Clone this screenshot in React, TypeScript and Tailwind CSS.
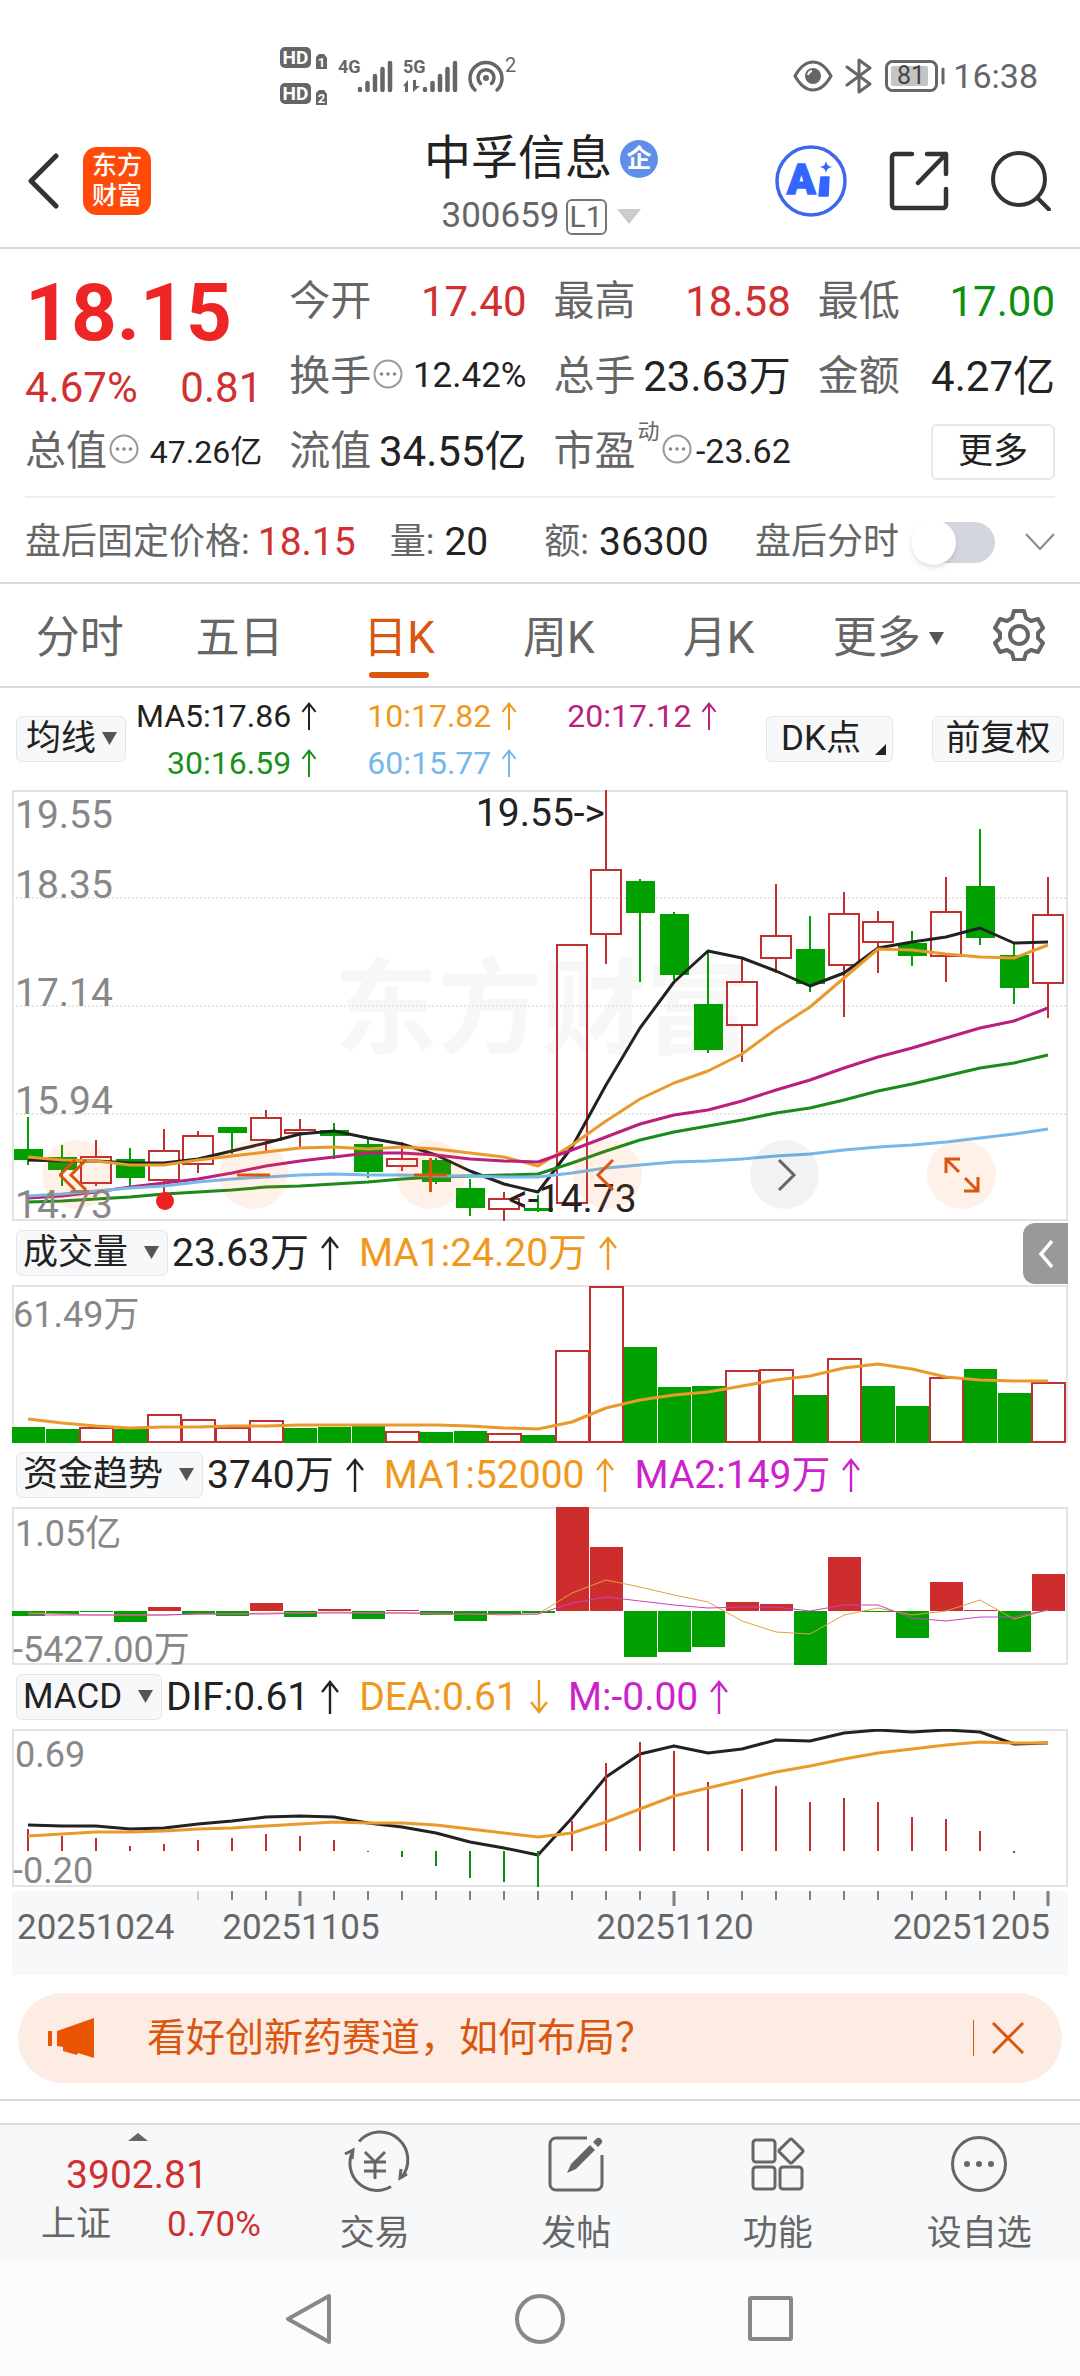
import React, { useState } from 'react'

type Candle = { high: number; low: number; top: number; bottom: number; up: boolean }

const STEP = 34
const WIDTH = 1056

const RED = '#c03030'
const GREEN = '#00a000'

// high, low, body top, body bottom, up
const candles: Candle[] = [
  [327, 375, 359, 370, 0], [355, 396, 367, 380, 0], [350, 396, 367, 393, 1], [358, 397, 369, 388, 0],
  [339, 411, 361, 390, 1], [341, 383, 346, 374, 1], [337, 364, 337, 343, 0], [320, 362, 328, 350, 1],
  [329, 357, 340, 343, 1], [333, 369, 340, 346, 0], [349, 388, 354, 382, 0], [352, 381, 369, 376, 1],
  [368, 394, 370, 392, 0], [389, 426, 398, 418, 0], [402, 431, 409, 419, 1], [405, 422, 418, 421, 0],
  [155, 413, 155, 413, 1], [0, 174, 80, 144, 1], [89, 192, 91, 123, 0], [122, 190, 124, 185, 0],
  [161, 263, 214, 260, 0], [168, 272, 192, 235, 1], [94, 183, 146, 168, 1], [126, 202, 159, 194, 0],
  [102, 227, 124, 175, 1], [121, 183, 132, 152, 1], [141, 176, 153, 166, 0], [87, 192, 122, 166, 1],
  [39, 155, 96, 148, 0], [153, 214, 165, 198, 0], [87, 228, 125, 193, 1],
].map(([high, low, top, bottom, up]) => ({ high, low, top, bottom, up: up === 1 }))

const averages = [
  { color: '#222222', data: [370, 371, 371, 373, 373, 369, 361, 353, 344, 341, 348, 354, 365, 381, 394, 402, 357, 295, 238, 192, 161, 168, 181, 196, 183, 158, 152, 147, 138, 153, 152] },
  { color: '#ea9a2b', data: [367, 370, 371, 375, 375, 370, 366, 362, 358, 357, 359, 357, 359, 363, 367, 376, 355, 331, 309, 293, 281, 264, 239, 217, 188, 159, 160, 164, 167, 168, 155] },
  { color: '#bb1f7c', data: [408, 406, 402, 397, 393, 389, 383, 376, 371, 367, 363, 363, 365, 369, 371, 372, 360, 347, 334, 325, 320, 311, 300, 290, 278, 267, 258, 248, 238, 231, 218] },
  { color: '#1a8a1a', data: [412, 411, 409, 407, 404, 402, 400, 397, 396, 394, 392, 389, 387, 386, 385, 384, 373, 361, 350, 342, 336, 330, 323, 318, 310, 301, 294, 286, 278, 273, 265] },
  { color: '#76b8ea', data: [406, 404, 401, 398, 396, 392, 389, 387, 385, 384, 385, 385, 386, 386, 387, 387, 383, 378, 375, 372, 371, 369, 366, 364, 360, 357, 355, 352, 348, 344, 339] },
]

const volumeTops = [142, 144, 142, 144, 129, 134, 142, 135, 143, 142, 141, 146, 147, 146, 148, 150, 65, 1, 62, 102, 101, 85, 84, 110, 73, 101, 121, 92, 84, 108, 97]
const volumeUp = [2, 4, 5, 6, 7, 11, 14, 16, 17, 21, 22, 24, 27, 30]
const volumeMa = [134, 138, 141, 143, 142, 142, 141, 141, 140, 140, 140, 140, 140, 141, 143, 144, 137, 123, 115, 110, 107, 101, 95, 91, 83, 79, 84, 92, 95, 96, 96]

const fundZero = 104
const fund = [109, 107, 105, 115, 100, 107, 109, 96, 110, 102, 112, 103, 108, 114, 107, 106, 0, 40, 150, 145, 140, 95, 97, 158, 50, 105, 131, 75, 103, 145, 67]
const fundMa1 = [106, 107, 108, 108, 108, 107, 107, 106, 106, 105, 106, 106, 107, 107, 108, 107, 86, 73, 80, 88, 95, 114, 125, 127, 108, 101, 108, 104, 93, 112, 103]
const fundMa2 = [108, 108, 108, 108, 108, 107, 107, 107, 106, 106, 106, 106, 106, 107, 107, 107, 96, 90, 94, 98, 101, 100, 100, 104, 98, 98, 111, 114, 110, 110, 103]

const macdZero = 122
const macd = [100, 107, 109, 117, 115, 111, 109, 105, 107, 111, 123, 128, 137, 149, 153, 158, 92, 34, 13, 22, 53, 60, 57, 73, 69, 73, 88, 90, 102, 124, 122]
const dif = [96, 97, 97, 100, 99, 95, 92, 88, 87, 88, 94, 98, 104, 113, 119, 126, 89, 48, 25, 17, 24, 20, 11, 12, 4, 1, 3, 1, 3, 15, 14]
const dea = [107, 105, 103, 103, 102, 100, 99, 97, 95, 93, 94, 94, 96, 100, 104, 108, 104, 93, 80, 67, 59, 51, 43, 37, 30, 24, 20, 16, 13, 14, 14]

const cx = (i: number) => 16 + STEP * i

const Line = ({ data, color, width = 3 }: { data: number[]; color: string; width?: number }) => (
  <polyline
    points={data.map((y, i) => `${cx(i)},${y}`).join(' ')}
    fill="none"
    stroke={color}
    strokeWidth={width}
    strokeLinejoin="round"
  />
)

const Frame = ({ height }: { height: number }) => (
  <rect x="1" y="1" width={WIDTH - 2} height={height - 2} fill="none" stroke="#e3e3e3" strokeWidth="2" />
)

const PriceChart = () => (
  <svg viewBox="0 0 1056 431" className="block w-full overflow-visible" role="img" aria-label="日K">
    <text x="322" y="256" fontSize="104" fontWeight="700" fill="#f7f7f7">东方财富</text>
    <Frame height={431} />
    {[108, 216, 324].map((y) => (
      <line key={y} x1="0" x2="1056" y1={y} y2={y} stroke="#e6e6e6" strokeWidth="2" strokeDasharray="2 2" />
    ))}
    {candles.map((c, i) =>
      c.up ? (
        <g key={i} stroke={RED} strokeWidth="2" fill="none">
          <line x1={cx(i)} x2={cx(i)} y1={c.high} y2={c.top} />
          <line x1={cx(i)} x2={cx(i)} y1={c.bottom} y2={c.low} />
          <rect x={cx(i) - 15} y={c.top} width="30" height={c.bottom - c.top} />
        </g>
      ) : (
        <g key={i} fill={GREEN}>
          <rect x={cx(i) - 1} y={c.high} width="2" height={c.low - c.high} />
          <rect x={cx(i) - 14} y={c.top} width="29" height={c.bottom - c.top} />
        </g>
      )
    )}
    {averages.map((a) => (
      <Line key={a.color} data={a.data} color={a.color} />
    ))}
    <circle cx="153" cy="411" r="9" fill="#ee2222" />
    <g fontSize="39" fill="#888888">
      <text x="3" y="38">19.55</text>
      <text x="3" y="108">18.35</text>
      <text x="3" y="216">17.14</text>
      <text x="3" y="324">15.94</text>
      <text x="3" y="428">14.73</text>
    </g>
    <g fontSize="39" fill="#222222">
      <text x="593" y="36" textAnchor="end">{'19.55->'}</text>
      <text x="496" y="422">{'<-14.73'}</text>
    </g>
  </svg>
)

const VolumeChart = () => (
  <svg viewBox="0 0 1056 158" className="block w-full" role="img" aria-label="成交量">
    <Frame height={158} />
    <text x="1" y="42" fontSize="36" fill="#888888">61.49万</text>
    {volumeTops.map((y, i) =>
      volumeUp.includes(i) ? (
        <rect key={i} x={STEP * i} y={y + 1} width="33" height={156 - y} fill="#ffffff" stroke={RED} strokeWidth="2" />
      ) : (
        <rect key={i} x={STEP * i} y={y} width="33" height={158 - y} fill={GREEN} />
      )
    )}
    <Line data={volumeMa} color="#ea9a2b" />
  </svg>
)

const FundChart = () => (
  <svg viewBox="0 0 1056 158" className="block w-full" role="img" aria-label="资金趋势">
    <Frame height={158} />
    <text x="3" y="39" fontSize="36" fill="#888888">1.05亿</text>
    <text x="1" y="155" fontSize="36" fill="#888888">-5427.00万</text>
    {fund.map((y, i) => (
      <rect
        key={i}
        x={STEP * i}
        y={Math.min(y, fundZero)}
        width="33"
        height={Math.abs(y - fundZero)}
        fill={y < fundZero ? '#ce2d2d' : GREEN}
      />
    ))}
    <Line data={fundMa1} color="#e0a040" width={1} />
    <Line data={fundMa2} color="#c840c8" width={1} />
  </svg>
)

const MacdChart = () => (
  <svg viewBox="0 0 1056 158" className="block w-full" role="img" aria-label="MACD">
    <Frame height={158} />
    <text x="3" y="38" fontSize="36" fill="#888888">0.69</text>
    <text x="1" y="154" fontSize="36" fill="#888888">-0.20</text>
    <Line data={dif} color="#222222" />
    {macd.map((y, i) => (
      <line key={i} x1={cx(i)} x2={cx(i)} y1={y} y2={macdZero} stroke={y < macdZero ? RED : '#0d8f0d'} strokeWidth="2" />
    ))}
    <Line data={dea} color="#ea9a2b" />
  </svg>
)

const TimeAxis = () => (
  <svg viewBox="0 0 1056 84" className="block w-full bg-[#f7f8fa]" role="img" aria-label="日期">
    {Array.from({ length: 26 }, (_, k) => k + 5).map((i) => {
      const major = i === 8 || i === 19 || i === 30
      return (
        <line key={i} x1={cx(i)} x2={cx(i)} y1="0" y2={major ? 15 : 9} stroke={i === 5 ? '#cccccc' : '#808080'} strokeWidth={major ? 3 : 2} />
      )
    })}
    <g fontSize="35" fill="#666666">
      <text x="5" y="48">20251024</text>
      <text x="289" y="48" textAnchor="middle">20251105</text>
      <text x="663" y="48" textAnchor="middle">20251120</text>
      <text x="1038" y="48" textAnchor="end">20251205</text>
    </g>
  </svg>
)

const Arrow = ({ down, small }: { down?: boolean; small?: boolean }) => (
  <svg
    viewBox="0 0 18 34"
    className={`${small ? 'h-7 w-4' : 'h-[34px] w-[18px]'} ${down ? 'rotate-180' : ''} shrink-0`}
    fill="none"
    stroke="currentColor"
    strokeWidth="2.4"
    aria-hidden="true"
  >
    <path d="M9 34V2M1 12 9 2l8 10" />
  </svg>
)

const Caret = ({ className = '' }: { className?: string }) => (
  <svg viewBox="0 0 15 13" className={`h-[13px] w-[15px] ${className}`} fill="#555555" aria-hidden="true">
    <path d="M0 0h15L7.500 13z" />
  </svg>
)

const Picker = ({ label, value, tight }: { label: string; value: string; tight?: boolean }) => (
  <label className="relative shrink-0">
    <select
      aria-label={label}
      className={`block h-[46px] appearance-none rounded-md border border-[#e4e6ea] bg-[#f7f8fa] text-[35px] leading-[44px] text-[#222222] ${
        tight ? 'pl-[9px] pr-[28px]' : 'pl-1.5 pr-[38px]'
      }`}
    >
      <option>{value}</option>
    </select>
    <Caret className="pointer-events-none absolute right-[9px] top-4" />
  </label>
)

type Reading = { text: string; color: string; down?: boolean }

const IndicatorBar = ({ label, name, readings, children }: { label: string; name: string; readings: Reading[]; children?: React.ReactNode }) => (
  <div className="relative flex h-16 items-center pl-1">
    <Picker label={label} value={name} />
    <div className="ml-1 flex gap-5">
      {readings.map((r) => (
        <span key={r.text} className={`flex items-center gap-3 text-[39px] leading-[46px] ${r.color}`}>
          {r.text}
          <Arrow down={r.down} />
        </span>
      ))}
    </div>
    {children}
  </div>
)

const InfoDot = () => (
  <svg viewBox="0 0 30 30" className="mb-1.5 ml-0.5 h-[30px] w-[30px] shrink-0" aria-hidden="true">
    <circle cx="15" cy="15" r="13.500" fill="none" stroke="#999999" strokeWidth="2" />
    <g fill="#888888">
      <circle cx="8.500" cy="15" r="1.800" />
      <circle cx="15" cy="15" r="1.800" />
      <circle cx="21.500" cy="15" r="1.800" />
    </g>
  </svg>
)

type QuoteProps = { label: string; value: string; color?: string; info?: boolean; sup?: string; size?: string }

const Quote = ({ label, value, color = 'text-[#222222]', info, sup, size = 'text-[42px]' }: QuoteProps) => (
  <div className="flex h-[75px] items-center whitespace-nowrap">
    <span className="flex items-center text-[41px] text-[#666666]">
      {label}
      {sup && <sup className="top-0 mb-10 ml-0.5 text-[22px] leading-none">{sup}</sup>}
      {info && <InfoDot />}
    </span>
    <span className={`ml-auto ${size} ${color}`}>{value}</span>
  </div>
)

const StatusBar = () => (
  <div className="flex h-[110px] items-center pl-[280px] pr-[42px] pt-[42px] text-[#666666]">
    <svg viewBox="0 0 48 58" className="h-[58px] w-[48px] overflow-visible" fill="currentColor" aria-label="HD">
      {[0, 36].map((y, i) => (
        <g key={y} transform={`translate(0 ${y})`}>
          <rect width="31" height="21" rx="5" />
          <text x="15.500" y="17" fontSize="19" fontWeight="700" textAnchor="middle" fill="#ffffff">HD</text>
          <path d="M39 7h5l3 4v11H36V10z" />
          <text x="41.500" y="20" fontSize="13" fontWeight="700" textAnchor="middle" fill="#ffffff">{i + 1}</text>
        </g>
      ))}
    </svg>
    <svg viewBox="0 0 55 36" className="ml-[10px] h-9 w-[55px] overflow-visible" stroke="currentColor" strokeWidth="4.500" strokeLinecap="round" aria-label="4G">
      <text x="0" y="15" fontSize="18" fontWeight="700" fill="currentColor" stroke="none">4G</text>
      <path d="M22 31v1M29.500 25v7M37 18v14M44.500 11v21M52 5v27" />
    </svg>
    <svg viewBox="0 0 55 36" className="ml-[10px] h-9 w-[55px] overflow-visible" stroke="currentColor" strokeWidth="4.500" strokeLinecap="round" aria-label="5G">
      <text x="0" y="15" fontSize="18" fontWeight="700" fill="currentColor" stroke="none">5G</text>
      <path d="M22 31v1M29.500 25v7M37 18v14M44.500 11v21M52 5v27" />
      <path d="M0 28l5-6v12h-3v-6zM10 22h3v6h4l-7 6z" fill="currentColor" stroke="none" />
    </svg>
    <svg viewBox="0 0 48 38" className="ml-[10px] h-[38px] w-12 overflow-visible" fill="none" stroke="currentColor" strokeWidth="3.500" strokeLinecap="round" aria-hidden="true">
      <circle cx="18" cy="21" r="3" fill="currentColor" stroke="none" />
      <path d="M12.500 26.500a8 8 0 1 1 11 0M7 33a16 16 0 1 1 22 0" />
      <text x="37" y="15" fontSize="20" fill="currentColor" stroke="none">2</text>
    </svg>
    <div className="ml-auto flex items-center">
      <svg viewBox="0 0 40 32" className="h-8 w-10" fill="none" stroke="currentColor" strokeWidth="3" aria-hidden="true">
        <path d="M2 16C7 7 13 2 20 2s13 5 18 14c-5 9-11 14-18 14S7 25 2 16z" />
        <circle cx="20" cy="16" r="8" fill="currentColor" stroke="none" />
        <path d="M15 15a5 5 0 0 1 4-4" stroke="#ffffff" strokeWidth="2" />
      </svg>
      <svg viewBox="0 0 28 36" className="ml-3 h-9 w-7" fill="none" stroke="currentColor" strokeWidth="3" strokeLinejoin="round" strokeLinecap="round" aria-hidden="true">
        <path d="M2 9l23 17-11 8V2l11 8L2 27" />
      </svg>
      <svg viewBox="0 0 60 32" className="ml-3 h-8 w-[60px]" fill="none" stroke="currentColor" strokeWidth="3" aria-label="81">
        <rect x="1.500" y="1.500" width="50" height="29" rx="6" />
        <rect x="6" y="6" width="37" height="20" rx="2" fill="#c4c4c4" stroke="none" />
        <path d="M58 9v14" strokeLinecap="round" />
        <text x="26" y="24" fontSize="25" textAnchor="middle" fill="#444444" stroke="none">81</text>
      </svg>
      <time className="ml-2 text-[34px] leading-none">16:38</time>
    </div>
  </div>
)

const Header = () => (
  <header className="grid h-[139px] grid-cols-[1fr_auto_1fr] items-center border-b-2 border-[#dadada] px-[27px] pt-1">
    <div className="flex items-center gap-6">
      <button type="button" aria-label="返回">
        <svg viewBox="0 0 32 56" className="h-14 w-8" fill="none" stroke="#333333" strokeWidth="5" strokeLinecap="round" strokeLinejoin="round">
          <path d="M29 3L4 28l25 25" />
        </svg>
      </button>
      <a href="#home" className="flex h-[68px] w-[68px] flex-col items-center justify-center rounded-[14px] bg-[#ff4a0a] text-[25px] font-medium leading-[30px] text-white">
        <span>东方</span>
        <span>财富</span>
      </a>
    </div>
    <div className="flex flex-col items-center pl-0.5 pt-3.5">
      <h1 className="flex h-[58px] items-center gap-2 text-[47px] text-[#222222]">
        中孚信息
        <span className="flex h-[38px] w-[38px] items-center justify-center rounded-full bg-[#5f8fe8] text-[25px] font-bold leading-none text-white">企</span>
      </h1>
      <button type="button" className="flex h-[58px] items-center text-[35px] text-[#666666]">
        300659
        <span className="ml-1.5 rounded-md border-2 border-[#777777] px-0.5 text-[30px] leading-8">L1</span>
        <svg viewBox="0 0 24 15" className="ml-2.5 h-[15px] w-6" fill="#cccccc" aria-hidden="true">
          <path d="M0 0h24L12 15z" />
        </svg>
      </button>
    </div>
    <div className="flex items-center justify-end gap-[42px] pr-0.5">
      <button type="button" aria-label="Ai">
        <svg viewBox="0 0 72 72" className="h-[72px] w-[72px]">
          <circle cx="36" cy="36" r="34" fill="none" stroke="#3d68ee" strokeWidth="3.500" />
          <text x="12" y="49" fontSize="42" fontWeight="900" fill="#3366ff" stroke="#3366ff" strokeWidth="1.500">A</text>
          <path d="M46 32h8l-1 19h-9z" fill="#3366ff" stroke="#3366ff" strokeWidth="1.500" strokeLinejoin="round" />
          <path d="M51 16c1 4 2 5 6 6-4 1-5 2-6 6-1-4-2-5-6-6 4-1 5-2 6-6z" fill="#3366ff" />
        </svg>
      </button>
      <button type="button" aria-label="分享">
        <svg viewBox="0 0 60 60" className="h-[60px] w-[60px]" fill="none" stroke="#333333" strokeWidth="4.500" strokeLinecap="round" strokeLinejoin="round">
          <path d="M23 3H6a3 3 0 0 0-3 3v48a3 3 0 0 0 3 3h48a3 3 0 0 0 3-3V38M38 3h19v20M57 3L29 32" />
        </svg>
      </button>
      <button type="button" aria-label="搜索">
        <svg viewBox="0 0 60 60" className="h-[60px] w-[60px]" fill="none" stroke="#333333" strokeWidth="4" strokeLinecap="round">
          <circle cx="28" cy="28" r="26" />
          <path d="M46.500 47L58 58.500" />
        </svg>
      </button>
    </div>
  </header>
)

const tabs = ['分时', '五日', '日K', '周K', '月K', '更多']

const PeriodTabs = () => {
  const [active, setActive] = useState('日K')
  return (
    <nav className="flex h-[104px] border-b-2 border-[#dadada]">
      <div className="grid flex-1 grid-cols-6">
        {tabs.map((t) => (
          <button
            key={t}
            type="button"
            onClick={() => setActive(t)}
            className={`relative flex items-center justify-center gap-2 pt-1.5 text-[44px] ${t === '更多' ? 'pl-5' : ''} ${
              active === t ? 'text-[#d9560f]' : 'text-[#666666]'
            }`}
          >
            {t}
            {t === '更多' && <Caret />}
            {active === t && <span className="absolute bottom-2 left-1/2 h-1.5 w-[60px] -translate-x-1/2 rounded-full bg-[#d9560f]" />}
          </button>
        ))}
      </div>
      <button type="button" aria-label="设置" className="flex w-[122px] items-center justify-center">
        <svg viewBox="0 0 52 52" className="h-[52px] w-[52px]" fill="none" stroke="#666666" strokeWidth="4" strokeLinejoin="round">
          <path d="M21 2h10l2 7 5 3 7-2 5 9-5 5v5l5 5-5 9-7-2-5 3-2 7H21l-2-7-5-3-7 2-5-9 5-5v-5l-5-5 5-9 7 2 5-3z" />
          <circle cx="26" cy="26" r="9" />
        </svg>
      </button>
    </nav>
  )
}

const legend = [
  { text: 'MA5:17.86', color: 'text-[#222222]' },
  { text: '10:17.82', color: 'text-[#f0981c]' },
  { text: '20:17.12', color: 'text-[#bb1f7c]' },
  { text: '30:16.59', color: 'text-[#1a901a]' },
  { text: '60:15.77', color: 'text-[#76b8ea]' },
]

const chartButtons = [
  { label: '最左', path: 'M16 3L1 18l15 15M27 3L12 18l15 15' },
  { label: '缩小', path: 'M1 18h33' },
  { label: '放大', path: 'M1 18h33M17.500 1v34' },
  { label: '左移', path: 'M23 3L8 18l15 15' },
  { label: '右移', path: 'M12 3l15 15-15 15', muted: true },
  { label: '全屏', path: 'M2 16V2h14M2 2l13 13M34 20v14H20M34 34L21 21' },
]

const navItems = [
  {
    label: '交易',
    icon: (
      <>
        <path d="M13 6.500A27 27 0 0 1 55 43M45 51.500A27 27 0 0 1 7 16" />
        <path d="M-1 19l8-4-1 9M61 39l-7 4 1-9" />
        <path d="M19 17l10 10 10-10M18 27h22M18 36h22M29 27v17" />
      </>
    ),
  },
  {
    label: '发帖',
    icon: (
      <>
        <path d="M40 3H9a6 6 0 0 0-6 6v40a6 6 0 0 0 6 6h40a6 6 0 0 0 6-6V20" />
        <path d="M20 38l4-9 19-19 5 5-19 19zM46 7l3-3a3 3 0 0 1 5 5l-3 3z" fill="#666666" stroke="none" />
      </>
    ),
  },
  {
    label: '功能',
    icon: (
      <>
        <rect x="4" y="5" width="22" height="22" rx="3" />
        <rect x="4" y="32" width="22" height="22" rx="3" />
        <rect x="31" y="32" width="22" height="22" rx="3" />
        <rect x="33" y="7" width="18" height="18" rx="2" transform="rotate(45 42 16)" />
      </>
    ),
  },
  {
    label: '设自选',
    icon: (
      <>
        <circle cx="29" cy="29" r="26.500" />
        <g fill="#666666" stroke="none">
          <circle cx="17" cy="29" r="3" />
          <circle cx="29" cy="29" r="3" />
          <circle cx="41" cy="29" r="3" />
        </g>
      </>
    ),
  },
]

const App = () => {
  const [afterHours, setAfterHours] = useState(false)

  return (
    <div className="min-h-screen bg-white font-['Roboto','Noto_Sans_CJK_SC',sans-serif]">
      <StatusBar />
      <Header />

      <section className="border-b-2 border-[#dadada] px-[25px] pt-[15px]">
        <div className="grid grid-cols-4 gap-x-[27px]">
          <div className="row-span-2">
            <p className="text-[80px] font-bold leading-[98px] text-[#ee2525]">18.15</p>
            <p className="flex h-[50px] items-center justify-between text-[42px] text-[#d03030]">
              <span>4.67%</span>
              <span>0.81</span>
            </p>
          </div>
          <Quote label="今开" value="17.40" color="text-[#d03030]" />
          <Quote label="最高" value="18.58" color="text-[#d03030]" />
          <Quote label="最低" value="17.00" color="text-[#0d900d]" />
          <Quote label="换手" value="12.42%" info size="text-[35px]" />
          <Quote label="总手" value="23.63万" />
          <Quote label="金额" value="4.27亿" />
          <Quote label="总值" value="47.26亿" info size="text-[32px]" />
          <Quote label="流值" value="34.55亿" />
          <Quote label="市盈" sup="动" value="-23.62" info size="text-[34px]" />
          <div className="flex h-[75px] items-center justify-end">
            <button type="button" className="h-14 w-[124px] rounded-md border-2 border-[#e8e8e8] text-[35px] leading-[50px] text-[#222222]">更多</button>
          </div>
        </div>

        <div className="mt-[7px] flex h-[86px] items-center whitespace-nowrap border-t-2 border-[#eeeeee] pt-1 text-[36px] text-[#666666]">
          <span>盘后固定价格:</span>
          <span className="ml-2 text-[39px] text-[#d03030]">18.15</span>
          <span className="ml-[34px]">量:</span>
          <span className="ml-2.5 text-[39px] text-[#222222]">20</span>
          <span className="ml-14">额:</span>
          <span className="ml-2.5 text-[39px] text-[#222222]">36300</span>
          <label htmlFor="after-hours" className="ml-auto">盘后分时</label>
          <input
            id="after-hours"
            type="checkbox"
            checked={afterHours}
            onChange={() => setAfterHours(!afterHours)}
            className="ml-3 flex h-[41px] w-[84px] appearance-none items-center rounded-full bg-[#d3d7dd] before:h-[45px] before:w-[45px] before:shrink-0 before:rounded-full before:bg-white before:shadow-md before:content-[''] checked:justify-end checked:bg-[#d9560f]"
          />
          <button type="button" aria-label="展开" className="ml-[30px]">
            <svg viewBox="0 0 30 18" className="h-[18px] w-[30px]" fill="none" stroke="#888888" strokeWidth="2">
              <path d="M1 1l14 15L29 1" />
            </svg>
          </button>
        </div>
      </section>

      <PeriodTabs />

      <section className="flex h-[102px] items-center px-4">
        <Picker label="主图指标" value="均线" tight />
        <div className="ml-2.5 grid grid-cols-[auto_auto_auto] justify-items-end gap-x-[50px]">
          {legend.map((l) => (
            <span key={l.text} className={`flex h-[47px] items-center gap-2.5 text-[32px] ${l.color}`}>
              {l.text}
              <Arrow small />
            </span>
          ))}
        </div>
        <div className="ml-auto flex gap-[39px] text-[35px] text-[#222222]">
          <button type="button" className="relative h-[46px] w-[127px] rounded-md border border-[#e4e6ea] bg-[#f7f8fa] pl-3.5 text-left leading-[42px]">
            DK点
            <svg viewBox="0 0 11 11" className="absolute bottom-1.5 right-1.5 h-[11px] w-[11px]" fill="#222222" aria-hidden="true">
              <path d="M11 0v11H0z" />
            </svg>
          </button>
          <button type="button" className="h-[46px] w-[132px] rounded-md border border-[#e4e6ea] bg-[#f7f8fa] leading-[42px]">前复权</button>
        </div>
      </section>

      <main className="px-3">
        <div className="relative">
          <PriceChart />
          <div className="absolute inset-x-0 bottom-3 flex justify-between pl-[30px] pr-[72px]">
            {chartButtons.map((b) => (
              <button
                key={b.label}
                type="button"
                aria-label={b.label}
                className={`flex h-[69px] w-[69px] items-center justify-center rounded-full ${
                  b.muted ? 'bg-black/5 text-[#666666]' : 'bg-[#ff6a1a]/10 text-[#d9560f]'
                }`}
              >
                <svg viewBox="0 0 36 36" className="h-9 w-9" fill="none" stroke="currentColor" strokeWidth="3">
                  <path d={b.path} />
                </svg>
              </button>
            ))}
          </div>
        </div>

        <IndicatorBar
          label="副图一"
          name="成交量"
          readings={[
            { text: '23.63万', color: 'text-[#222222]' },
            { text: 'MA1:24.20万', color: 'text-[#f0981c]' },
          ]}
        >
          <button type="button" aria-label="展开侧栏" className="absolute right-0 top-0.5 flex h-[61px] w-[45px] items-center justify-center rounded-l-xl bg-[#999999]">
            <svg viewBox="0 0 16 28" className="h-7 w-4" fill="none" stroke="#ffffff" strokeWidth="3.500">
              <path d="M14 1L3 14l11 13" />
            </svg>
          </button>
        </IndicatorBar>
        <VolumeChart />

        <IndicatorBar
          label="副图二"
          name="资金趋势"
          readings={[
            { text: '3740万', color: 'text-[#222222]' },
            { text: 'MA1:52000', color: 'text-[#f0981c]' },
            { text: 'MA2:149万', color: 'text-[#cc22cc]' },
          ]}
        />
        <FundChart />

        <IndicatorBar
          label="副图三"
          name="MACD"
          readings={[
            { text: 'DIF:0.61', color: 'text-[#222222]' },
            { text: 'DEA:0.61', color: 'text-[#f0981c]', down: true },
            { text: 'M:-0.00', color: 'text-[#cc22cc]' },
          ]}
        />
        <MacdChart />
        <div className="mt-1">
          <TimeAxis />
        </div>
      </main>

      <aside className="mx-[18px] mt-[18px] flex h-[90px] items-center rounded-full bg-[#fcece3] pl-[30px] pr-[38px] text-[#d9560f]">
        <svg viewBox="0 0 46 40" className="h-10 w-[46px] shrink-0" fill="#ea5504" aria-hidden="true">
          <path d="M0 13h4v15H0zM9 13L46 0v40l-16-5-1 2-14-4v-4l-6-1z" />
        </svg>
        <a href="#topic" className="ml-[53px] text-[39px]">看好创新药赛道，如何布局？</a>
        <button type="button" aria-label="关闭" className="ml-auto flex h-9 items-center border-l border-[#d9560f] pl-[18px]">
          <svg viewBox="0 0 32 32" className="h-8 w-8" fill="none" stroke="#d9560f" strokeWidth="3">
            <path d="M1 1l30 30M31 1L1 31" />
          </svg>
        </button>
      </aside>

      <div className="mt-4 h-[26px] border-y-2 border-[#dadada]" />

      <nav className="flex h-[136px] bg-[#f7f8fa] text-[35px] text-[#666666]">
        <a href="#index" className="relative flex w-[274px] flex-col items-center pt-[27px]">
          <svg viewBox="0 0 20 8" className="absolute left-32 top-2 h-2 w-5" fill="#666666" aria-hidden="true">
            <path d="M10 0l10 8H0z" />
          </svg>
          <span className="text-[39px] leading-[46px] text-[#d03030]">3902.81</span>
          <span className="flex w-full gap-14 pl-[41px] leading-[54px]">
            上证
            <span className="text-[#d03030]">0.70%</span>
          </span>
        </a>
        {navItems.map((n) => (
          <a key={n.label} href={`#${n.label}`} className="flex flex-1 flex-col items-center pt-2.5">
            <svg viewBox="0 0 58 58" className="h-[58px] w-[58px] overflow-visible" fill="none" stroke="#666666" strokeWidth="3" aria-hidden="true">
              {n.icon}
            </svg>
            <span className="mt-3.5 leading-[54px]">{n.label}</span>
          </a>
        ))}
      </nav>

      <div className="flex h-[115px] items-center justify-center gap-[179px] bg-[#fcfcfc]">
        <button type="button" aria-label="系统返回">
          <svg viewBox="0 0 52 52" className="h-[52px] w-[52px]" fill="none" stroke="#888888" strokeWidth="4" strokeLinejoin="round">
            <path d="M46 3v46L5 26z" />
          </svg>
        </button>
        <button type="button" aria-label="主屏幕">
          <svg viewBox="0 0 52 52" className="h-[52px] w-[52px]" fill="none" stroke="#888888" strokeWidth="4">
            <circle cx="26" cy="26" r="23" />
          </svg>
        </button>
        <button type="button" aria-label="最近任务">
          <svg viewBox="0 0 52 52" className="h-[52px] w-[52px]" fill="none" stroke="#888888" strokeWidth="4" strokeLinejoin="round">
            <rect x="5" y="5" width="41" height="41" rx="1" />
          </svg>
        </button>
      </div>
    </div>
  )
}

export default App
